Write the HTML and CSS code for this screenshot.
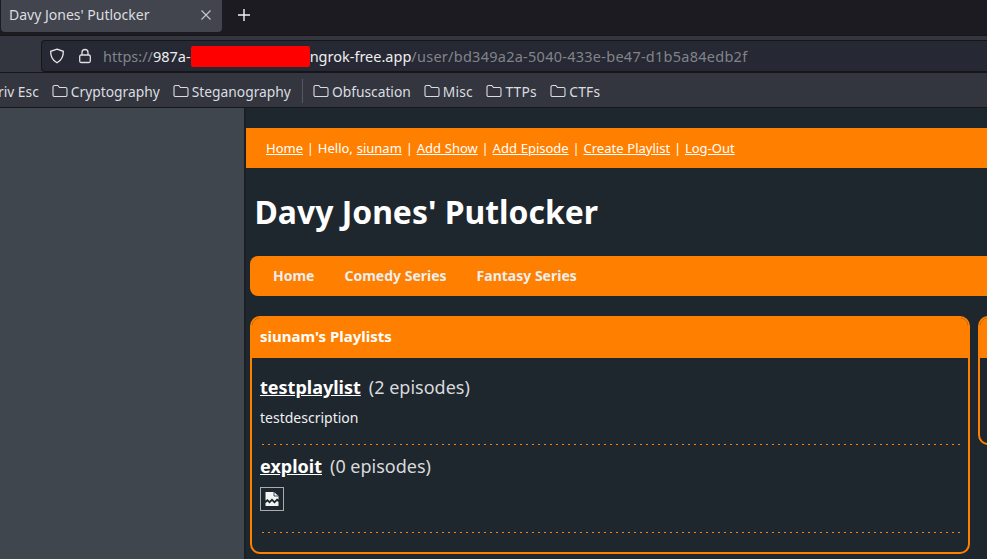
FILE: index.html
```html
<!DOCTYPE html>
<html lang="en">
<head>
<meta charset="utf-8">
<title>Davy Jones' Putlocker</title>
<link rel="stylesheet" href="styles.css">
</head>
<body>
<div class="tabbar">
  <div class="tab"><span class="tab-title">Davy Jones' Putlocker</span>
    <svg class="tab-close" width="12" height="12" viewBox="0 0 12 12"><path d="M1.5 1.5l9 9M10.5 1.5l-9 9" stroke="#c8c9cc" stroke-width="1.1" fill="none"/></svg>
  </div>
  <svg class="new-tab" width="14" height="14" viewBox="0 0 14 14"><path d="M7 1v12M1 7h12" stroke="#f4f4f5" stroke-width="1.4" fill="none"/></svg>
</div>
<div class="toolbar">
  <div class="urlbar">
    <svg class="shield" width="16" height="16" viewBox="0 0 16 16"><path d="M8 1.200l6.300 2.100c.2 4.800-1.700 9-6.300 11.500C3.400 12.300 1.500 8.100 1.700 3.300z" fill="none" stroke="#e8e8ea" stroke-width="1.300"/></svg>
    <svg class="lock" width="14" height="16" viewBox="0 0 14 16"><path d="M4 7V4.500a3 3 0 0 1 6 0V7" fill="none" stroke="#e0e0e3" stroke-width="1.300"/><rect x="1.700" y="7" width="10.600" height="7.500" rx="1.500" fill="none" stroke="#e0e0e3" stroke-width="1.300"/></svg>
    <span class="url"><span class="dim">https://</span><span class="host-a">987a-</span><span class="redact"></span><span class="host-b">ngrok-free.app</span><span class="dim path">/user/bd349a2a-5040-433e-be47-d1b5a84edb2f</span></span>
  </div>
</div>
<div class="bookmarks">
  <span class="bm bm-cut">riv Esc</span>
  <span class="bm"><svg class="folder" viewBox="0 0 16 14"><path d="M1 3a1.500 1.500 0 0 1 1.500-1.500h3.300l1.700 2h6a1.500 1.500 0 0 1 1.500 1.500v6a1.500 1.500 0 0 1-1.500 1.500h-11A1.500 1.500 0 0 1 1 11z" fill="none" stroke="#dcdcde" stroke-width="1.100"/></svg>Cryptography</span>
  <span class="bm"><svg class="folder" viewBox="0 0 16 14"><path d="M1 3a1.500 1.500 0 0 1 1.500-1.500h3.300l1.700 2h6a1.500 1.500 0 0 1 1.500 1.500v6a1.500 1.500 0 0 1-1.500 1.500h-11A1.500 1.500 0 0 1 1 11z" fill="none" stroke="#dcdcde" stroke-width="1.100"/></svg>Steganography</span>
  <span class="bm-sep"></span>
  <span class="bm"><svg class="folder" viewBox="0 0 16 14"><path d="M1 3a1.500 1.500 0 0 1 1.500-1.500h3.300l1.700 2h6a1.500 1.500 0 0 1 1.500 1.500v6a1.500 1.500 0 0 1-1.500 1.500h-11A1.500 1.500 0 0 1 1 11z" fill="none" stroke="#dcdcde" stroke-width="1.100"/></svg>Obfuscation</span>
  <span class="bm bm-wide"><svg class="folder" viewBox="0 0 16 14"><path d="M1 3a1.500 1.500 0 0 1 1.500-1.500h3.300l1.700 2h6a1.500 1.500 0 0 1 1.500 1.500v6a1.500 1.500 0 0 1-1.500 1.500h-11A1.500 1.500 0 0 1 1 11z" fill="none" stroke="#dcdcde" stroke-width="1.100"/></svg>Misc</span>
  <span class="bm bm-wide"><svg class="folder" viewBox="0 0 16 14"><path d="M1 3a1.500 1.500 0 0 1 1.500-1.500h3.300l1.700 2h6a1.500 1.500 0 0 1 1.500 1.500v6a1.500 1.500 0 0 1-1.500 1.500h-11A1.500 1.500 0 0 1 1 11z" fill="none" stroke="#dcdcde" stroke-width="1.100"/></svg>TTPs</span>
  <span class="bm bm-wide"><svg class="folder" viewBox="0 0 16 14"><path d="M1 3a1.500 1.500 0 0 1 1.500-1.500h3.300l1.700 2h6a1.500 1.500 0 0 1 1.500 1.500v6a1.500 1.500 0 0 1-1.500 1.500h-11A1.500 1.500 0 0 1 1 11z" fill="none" stroke="#dcdcde" stroke-width="1.100"/></svg>CTFs</span>
</div>
<div class="viewport">
  <aside class="gutter"></aside>
  <main class="page">
    <div class="userbar"><a href="#">Home</a> | Hello, <a href="#">siunam</a> | <a href="#">Add Show</a> | <a href="#">Add Episode</a> | <a href="#">Create Playlist</a> | <a href="#">Log-Out</a></div>
    <h1 class="site-title">Davy Jones' Putlocker</h1>
    <nav class="mainnav"><a href="#">Home</a><a href="#">Comedy Series</a><a href="#">Fantasy Series</a></nav>
    <div class="columns">
      <section class="panel panel-main">
        <h2 class="panel-head">siunam's Playlists</h2>
        <div class="panel-body">
          <div class="playlist">
            <div class="pl-title"><a href="#">testplaylist</a><span class="pl-count">(2 episodes)</span></div>
            <p class="pl-desc">testdescription</p>
          </div>
          <div class="divider"></div>
          <div class="playlist playlist-two">
            <div class="pl-title"><a href="#">exploit</a><span class="pl-count">(0 episodes)</span></div>
            <div class="broken">
              <svg width="14" height="16" viewBox="0 0 14 16"><path d="M0.500 1h8.500l4.500 4v3.500l-1.500-1-2.500 2.500-2.500-2.500-2.500 2.500-2-2-2 1.500z" fill="#f2f3f3"/><path d="M9 1v4h4.500" fill="none" stroke="#1e262e" stroke-width=".8"/><path d="M0.500 12l2-1.500 2 2 2.500-2.500 2.500 2.500 2.500-2.500 1.500 1V15H0.500z" fill="#f2f3f3"/></svg>
            </div>
          </div>
          <div class="divider"></div>
        </div>
      </section>
      <section class="panel panel-side">
        <div class="panel-head panel-head-empty"></div>
      </section>
    </div>
  </main>
</div>
</body>
</html>
```
FILE: styles.css
```css
* { box-sizing: border-box; }
html, body { margin: 0; height: 100%; }
body {
  width: 987px;
  height: 559px;
  overflow: hidden;
  background: #1e262e;
  font-family: "Noto Sans", sans-serif;
  display: flex;
  flex-direction: column;
}
.tabbar {
  height: 36px;
  flex: none;
  background: #1c1b21;
  display: flex;
  align-items: flex-start;
  border-bottom: 1px solid #17171b;
}
.tab {
  width: 221px;
  height: 32px;
  margin-left: 1px;
  background: #42454d;
  border-radius: 0 0 4px 4px;
  display: flex;
  align-items: center;
  justify-content: space-between;
  padding: 0 9px 3px 8px;
  color: #dcdde0;
  font-size: 14px;
}
.tab-close { margin-right: 1px; }
.new-tab { margin: 8px 0 0 15px; }
.toolbar {
  height: 36px;
  flex: none;
  background: #33363e;
  padding: 4px 0 0 41px;
}
.urlbar {
  height: 32px;
  background: #262833;
  border: 1px solid #15151a;
  border-right: none;
  border-radius: 4px 0 0 4px;
  display: flex;
  align-items: center;
  padding-left: 7px;
  font-size: 14.500px;
}
.lock { margin-left: 13px; }
.url { margin-left: 11px; white-space: nowrap; display: flex; align-items: center; }
.dim { color: #82848b; }
.path { letter-spacing: .26px; }
.host-a, .host-b { color: #eeeef0; }
.redact { width: 119px; height: 21px; background: #fe0000; border-radius: 2px; }
.bookmarks {
  height: 36px;
  flex: none;
  background: #33363e;
  border-top: 1px solid #15151a;
  border-bottom: 1px solid #15151a;
  display: flex;
  align-items: center;
  padding-top: 2px;
  color: #dcdde0;
  font-size: 13.800px;
  white-space: nowrap;
}
.bm { display: flex; align-items: center; margin-right: 13px; }
.bm-wide { margin-right: 13.500px; letter-spacing: .2px; }
.bm-cut { margin-left: -2px; margin-right: 13px; }
.folder { width: 16px; height: 14px; margin-right: 3px; }
.bm-sep { width: 1px; height: 24px; background: #55585f; margin: 0 10px 0 -2px; }
.viewport { flex: 1; display: flex; min-height: 0; overflow: hidden; }
.gutter {
  width: 246px;
  flex: none;
  background: #3f464d;
  border-right: 2px solid #1a2026;
}
.page { flex: 1; min-width: 0; padding-top: 20px; overflow: hidden; background: #1e262e; color: #fff; }
.userbar {
  height: 40px;
  width: 800px;
  background: #ff7f00;
  padding-left: 20px;
  line-height: 40px;
  font-size: 13px;
  word-spacing: .45px;
  color: #fff;
  white-space: nowrap;
}
.userbar a { color: #fff; }
.site-title {
  margin: 0;
  padding: 22px 0 0 8.500px;
  height: 88px;
  font-size: 31.900px;
  line-height: 44px;
  font-weight: 700;
  color: #fff;
}
.mainnav {
  height: 40px;
  width: 800px;
  margin-left: 4px;
  background: #ff7f00;
  border-radius: 8px 0 0 8px;
  padding: 0 0 2px 23px;
  display: flex;
  align-items: center;
  gap: 30px;
  font-size: 14px;
  font-weight: 700;
}
.mainnav a { color: #eee; text-decoration: none; }
.columns { display: flex; gap: 8px; margin: 20px 0 0 4px; align-items: flex-start; width: 900px; }
.panel { border: 2px solid #ff7f00; border-radius: 10px; flex: none; overflow: hidden; }
.panel-main { width: 720px; height: 238px; }
.panel-side { width: 100px; height: 129px; }
.panel-head {
  margin: 0;
  height: 40px;
  background: #ff7f00;
  padding-left: 8px;
  font-size: 15px;
  line-height: 37px;
  font-weight: 700;
  color: #fff;
}
.panel-body { padding: 0 8px; }
.divider {
  height: 1px;
  background: repeating-linear-gradient(270deg, #ff7f00 0 2px, transparent 2px 6px);
}
.playlist:first-child { height: 86px; padding-top: 17px; }
.playlist-two { height: 87px; padding-top: 9px; }
.pl-title { font-size: 18px; line-height: 25px; color: #d8dadc; white-space: nowrap; }
.pl-title a { color: #fff; font-weight: 700; }
.pl-count { margin-left: 8px; }
.pl-desc { margin: 8px 0 0; font-size: 14px; line-height: 20px; color: #eef0f2; }
.broken {
  width: 24px;
  height: 24px;
  margin-top: 8px;
  border: 1px solid #a9adb0;
  display: flex;
  align-items: center;
  justify-content: center;
}
```
